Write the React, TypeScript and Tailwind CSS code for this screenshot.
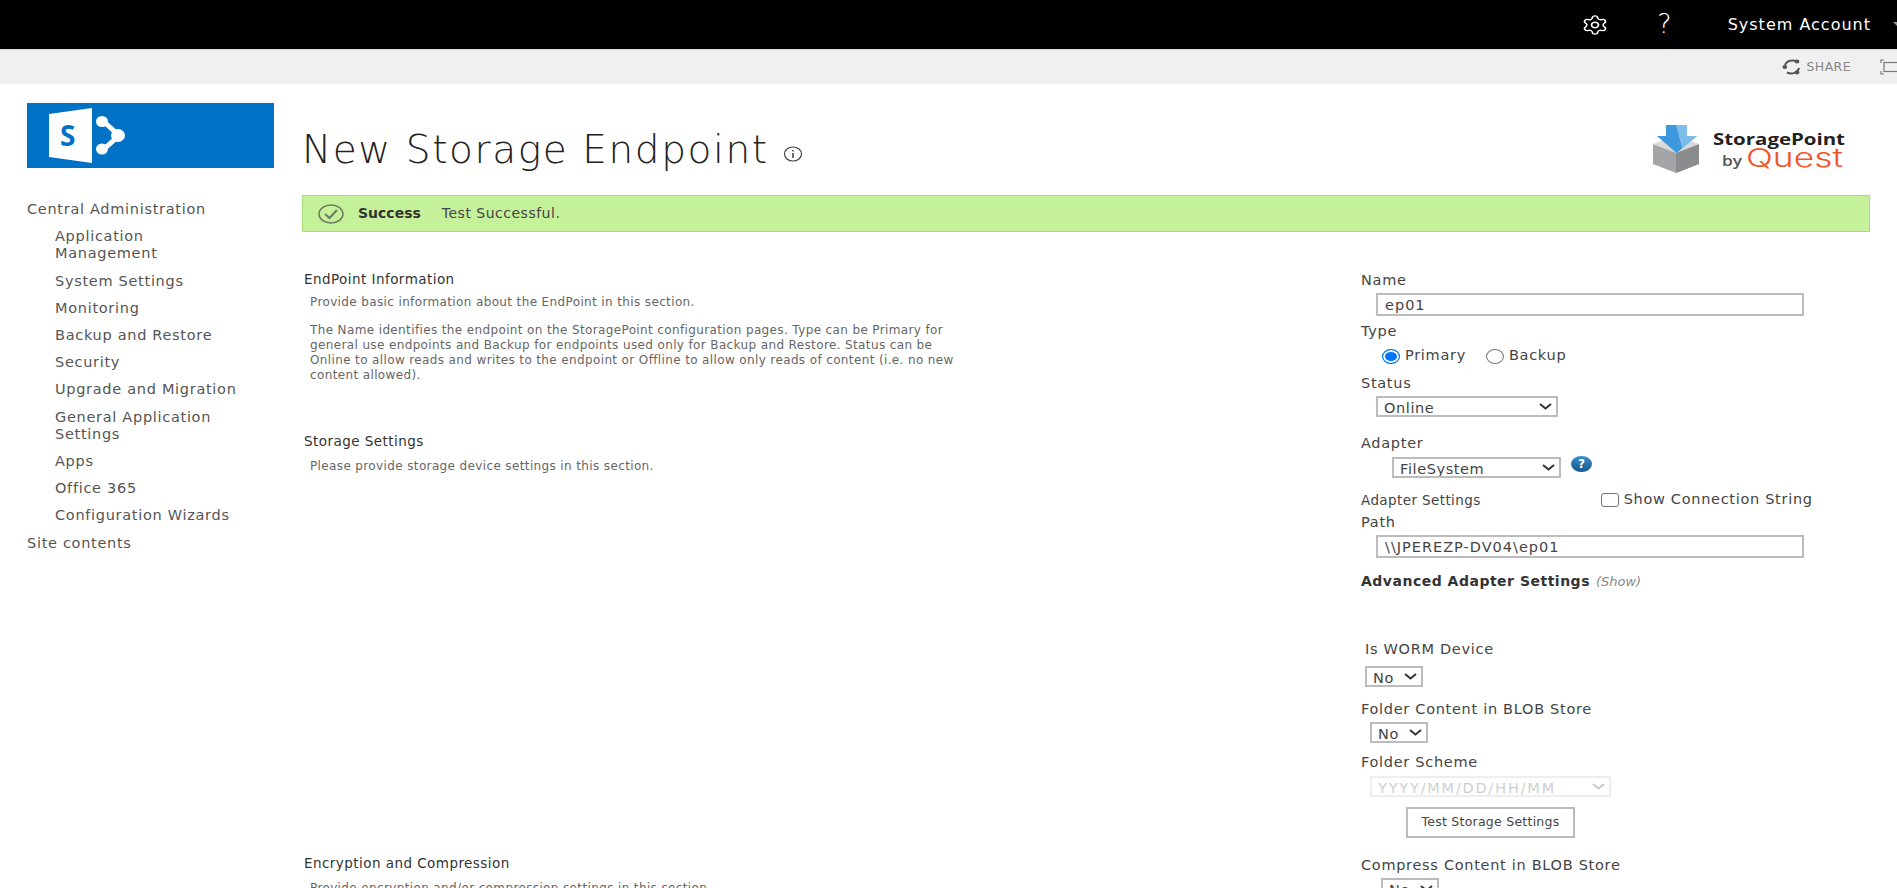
import { Settings } from "lucide-react";

const navItems = [
  "Application\nManagement",
  "System Settings",
  "Monitoring",
  "Backup and Restore",
  "Security",
  "Upgrade and Migration",
  "General Application\nSettings",
  "Apps",
  "Office 365",
  "Configuration Wizards",
];

function SharePointLogo() {
  return (
    <svg width="78" height="56" viewBox="0 0 78 56">
      <path d="M0 6 L43 0 V55 L0 49 Z" fill="#fff" />
      <text x="11" y="38" fontFamily="Open Sans, sans-serif" fontWeight="700" fontSize="28" fill="#0072c6">S</text>
      <path d="M54 13 L70 27.5 L54 42" stroke="#fff" strokeWidth="5" fill="none" />
      <ellipse cx="53" cy="13.5" rx="6" ry="5.5" fill="#fff" />
      <ellipse cx="53" cy="41" rx="6" ry="5.5" fill="#fff" />
      <ellipse cx="69" cy="27.5" rx="7" ry="6.5" fill="#fff" />
    </svg>
  );
}

function StoragePointLogo() {
  return (
    <svg width="193" height="48" viewBox="0 0 193 48">
      <path d="M1 19 L24 27 L47 19 L47 39 L24 48 L1 39 Z" fill="#a3a5a7" />
      <path d="M24 27 V48 L47 39 V19 Z" fill="#8a8c8e" />
      <path d="M1 19 L14 14 H34 L47 19 L24 28 Z" fill="#d9dadb" />
      <path d="M14 0 H35 V11 H45 L24.5 28 L5 11 H14 Z" fill="#3d97dc" />
      <path d="M24 0 H35 V11 H45 L30 23 Z" fill="#7cbdec" />
      <text x="61" y="20" fontFamily="Open Sans, sans-serif" fontWeight="700" fontSize="16.5" fill="#222" textLength="132" lengthAdjust="spacingAndGlyphs">StoragePoint</text>
      <text x="70" y="41" fontFamily="Open Sans, sans-serif" fontWeight="600" fontSize="14.5" fill="#555" textLength="20" lengthAdjust="spacingAndGlyphs">by</text>
      <text x="94" y="42" fontFamily="Inter, sans-serif" fontWeight="300" fontSize="26" fill="#f0562a" textLength="97" lengthAdjust="spacingAndGlyphs">Quest</text>
    </svg>
  );
}

function InfoIcon() {
  return (
    <svg width="20" height="16" viewBox="0 0 20 16" fill="none" stroke="#444" strokeWidth="1.2">
      <ellipse cx="10" cy="8" rx="8.5" ry="7" />
      <path d="M10 7 V12 M10 4 V5.5" strokeWidth="1.6" />
    </svg>
  );
}

function ShareIcon() {
  return (
    <svg width="20" height="16" viewBox="0 0 20 16" fill="none" stroke="#555" strokeWidth="2">
      <path d="M3 6 A8 6.5 0 0 1 15 2.5" />
      <path d="M17 9 A8 6.5 0 0 1 5 13.5" />
      <ellipse cx="2.8" cy="8" rx="2.4" ry="2" fill="#555" stroke="none" />
      <ellipse cx="15" cy="2.5" rx="2.4" ry="2" fill="#555" stroke="none" />
      <ellipse cx="15" cy="13.5" rx="2.4" ry="2" fill="#555" stroke="none" />
    </svg>
  );
}

function FocusIcon() {
  return (
    <svg width="17" height="18" viewBox="0 0 17 18" fill="none" stroke="#777" strokeWidth="1.2" className="shrink-0">
      <path d="M4 2 H1 V5 M1 13 V16 H4" />
      <rect x="4" y="4.5" width="22" height="9" />
    </svg>
  );
}

function Select({ label, className, box, disabled }: { label: string; className: string; box: string; disabled?: boolean }) {
  return (
    <div className={`relative ${box} ${className}`}>
      <select disabled={disabled} className={`block h-full w-full appearance-none border-2 bg-white pl-[6px] text-[14.5px] outline-none ${disabled ? "border-[#eeeeee] tracking-[1.8px] text-[#cfcfcf]" : "border-[#bcbcbc] tracking-[0.6px] text-[#444]"}`}>
        <option>{label}</option>
      </select>
      <svg width="13" height="7" viewBox="0 0 13 7" fill="none" stroke={disabled ? "#c8c8c8" : "#333"} strokeWidth="2" className="pointer-events-none absolute right-[6px] top-[7px]">
        <path d="M1 1 L6.5 5.5 L12 1" />
      </svg>
    </div>
  );
}

function Section({ title, children, className }: { title: string; children: React.ReactNode; className: string }) {
  return (
    <div className={className}>
      <h3 className="text-[13.5px] leading-[18px] tracking-[0.45px] text-[#333]">{title}</h3>
      <div className="mt-[9px] ml-[6px] w-[650px] text-[12px] leading-[15px] tracking-[0.37px] text-[#666]">{children}</div>
    </div>
  );
}

function Label({ children, className = "" }: { children: React.ReactNode; className?: string }) {
  return <div className={`text-[14.5px] leading-[20px] tracking-[0.7px] text-[#444] ${className}`}>{children}</div>;
}

const inputClass = "ml-[15px] block h-[23px] w-[428px] border-2 border-[#bcbcbc] px-[7px] text-[14.5px] tracking-[1px] text-[#444] outline-none";

export default function App() {
  return (
    <div className="h-[888px] w-[1897px] overflow-hidden bg-white font-['DejaVu_Sans',sans-serif]">
      {/* Suite bar */}
      <div className="flex h-[49px] items-center justify-end overflow-hidden bg-black text-white">
        <Settings width={28} height={22} preserveAspectRatio="none" strokeWidth={1.4} className="mr-[48px]" />
        <span className="mr-[56px] text-[27px] font-extralight">?</span>
        <span className="mr-[22px] text-[16px] tracking-[1px]">System Account</span>
        <span className="mr-[-6px] h-0 w-0 border-x-[5px] border-t-[5px] border-x-transparent border-t-[#999]" />
      </div>

      {/* Ribbon */}
      <div className="flex h-[35px] items-center justify-end overflow-hidden border-t border-[#ddd] bg-[#f0f0f0] text-[#888]">
        <ShareIcon />
        <span className="ml-[5px] mr-[29px] text-[12.5px] tracking-[0.4px]">SHARE</span>
        <FocusIcon />
      </div>

      <div className="flex">
        {/* Left nav */}
        <aside className="w-[302px] shrink-0 pl-[27px] pt-[19px]">
          <div className="flex h-[65px] w-[247px] items-center bg-[#0072c6] pl-[22px]">
            <SharePointLogo />
          </div>
          <nav className="mt-[28px] text-[14.5px] leading-[17.2px] tracking-[0.7px] text-[#555]">
            <div className="py-[5px]">Central Administration</div>
            {navItems.map((item) => (
              <div key={item} className="whitespace-pre-line py-[5px] pl-[28px]">{item}</div>
            ))}
            <div className="py-[5px]">Site contents</div>
          </nav>
        </aside>

        {/* Main */}
        <main className="min-w-0 flex-1 pr-[27px]">
          <div className="flex h-[111px] items-start justify-between">
            <div className="mt-[41px] flex items-center">
              <h1 className="text-[39px] leading-[50px] font-extralight tracking-[1.6px] text-[#222]">New Storage Endpoint</h1>
              <span className="ml-[14px] mt-[8px]"><InfoIcon /></span>
            </div>
            <div className="mr-[25px] mt-[41px]"><StoragePointLogo /></div>
          </div>

          <div className="flex h-[37px] items-center border border-[#a9dc74] bg-[#c6f19b] pl-[15px] text-[14px] text-[#444]">
            <svg width="26" height="20" viewBox="0 0 26 20" fill="none" stroke="#6d7a60" strokeWidth="1.5">
              <ellipse cx="13" cy="10" rx="12" ry="9" />
              <path d="M7 10 L11.5 14 L19 6" strokeWidth="2" />
            </svg>
            <span className="ml-[14px] font-bold text-[#333]">Success</span>
            <span className="ml-[21px] tracking-[0.5px]">Test Successful.</span>
          </div>

          <div className="flex">
            <div className="flex-1 pl-[2px]">
              <Section title="EndPoint Information" className="mt-[38px]">
                <p className="mt-[-2px]">Provide basic information about the EndPoint in this section.</p>
                <p className="mt-[13px]">
                  The Name identifies the endpoint on the StoragePoint configuration pages. Type can be Primary for general use endpoints and Backup for endpoints used only for Backup and Restore. Status can be Online to allow reads and writes to the endpoint or Offline to allow only reads of content (i.e. no new content allowed).
                </p>
              </Section>
              <Section title="Storage Settings" className="mt-[49px]">
                <p>Please provide storage device settings in this section.</p>
              </Section>
              <Section title="Encryption and Compression" className="mt-[380px]">
                <p>Provide encryption and/or compression settings in this section.</p>
              </Section>
            </div>

            {/* Form */}
            <div className="w-[509px] shrink-0 pt-[38px] text-[#444]">
              <Label>Name</Label>
              <input readOnly defaultValue="ep01" className={`mt-[3px] ${inputClass}`} />
              <Label className="mt-[5px]">Type</Label>
              <div className="ml-[21px] mt-[5px] flex h-[20px] items-center text-[14.5px] tracking-[0.7px]">
                <input type="radio" name="type" defaultChecked className="m-0 h-[15px] w-[18px] appearance-none rounded-[50%] border border-[#767676] bg-white checked:border-[#0075ff] checked:bg-[#0075ff] checked:shadow-[inset_0_0_0_2px_#fff]" />
                <span className="ml-[5px]">Primary</span>
                <input type="radio" name="type" className="m-0 ml-[20px] h-[15px] w-[18px] appearance-none rounded-[50%] border border-[#767676] bg-white checked:border-[#0075ff] checked:bg-[#0075ff] checked:shadow-[inset_0_0_0_2px_#fff]" />
                <span className="ml-[5px]">Backup</span>
              </div>
              <Label className="mt-[7px]">Status</Label>
              <Select label="Online" box="h-[21px] w-[182px]" className="mt-[3px] ml-[15px]" />
              <Label className="mt-[16px]">Adapter</Label>
              <div className="mt-[4px] ml-[31px] flex items-start">
                <Select label="FileSystem" box="h-[21px] w-[169px]" className="" />
                <span className="ml-[10px] mt-[-1px] flex h-[16px] w-[21px] items-center justify-center rounded-[50%] bg-gradient-to-b from-[#3a8fc8] to-[#12598f] text-[12px] leading-none font-bold text-white">?</span>
              </div>
              <div className="mt-[12px] flex h-[20px] items-center">
                <span className="text-[13.5px] tracking-[0.4px]">Adapter Settings</span>
                <input type="checkbox" className="m-0 ml-[120px] h-[14px] w-[18px] appearance-none rounded-[3px] border border-[#767676] bg-white" />
                <span className="ml-[5px] text-[14.5px] tracking-[0.7px]">Show Connection String</span>
              </div>
              <Label className="mt-[2px]">Path</Label>
              <input readOnly defaultValue="\\JPEREZP-DV04\ep01" className={`mt-[3px] ${inputClass}`} />
              <div className="mt-[13px] text-[14px] leading-[20px] tracking-[0.5px]">
                <b className="text-[#333]">Advanced Adapter Settings</b> <i className="ml-[1px] text-[13px] tracking-normal text-[#888]">(Show)</i>
              </div>
              <Label className="mt-[47px] ml-[4px]">Is WORM Device</Label>
              <Select label="No" box="h-[21px] w-[58px]" className="mt-[7px] ml-[4px]" />
              <Label className="mt-[12px]">Folder Content in BLOB Store</Label>
              <Select label="No" box="h-[21px] w-[58px]" className="mt-[3px] ml-[9px]" />
              <Label className="mt-[9px]">Folder Scheme</Label>
              <Select label="YYYY/MM/DD/HH/MM" box="h-[21px] w-[241px]" className="mt-[4px] ml-[9px]" disabled />
              <button className="mt-[10px] ml-[45px] block h-[31px] w-[169px] border-2 border-[#bcbcbc] bg-white text-[12.5px] tracking-[0.25px] text-[#444]">Test Storage Settings</button>
              <Label className="mt-[17px]">Compress Content in BLOB Store</Label>
              <Select label="No" box="h-[21px] w-[58px]" className="mt-[3px] ml-[20px]" />
            </div>
          </div>
        </main>
      </div>
    </div>
  );
}
